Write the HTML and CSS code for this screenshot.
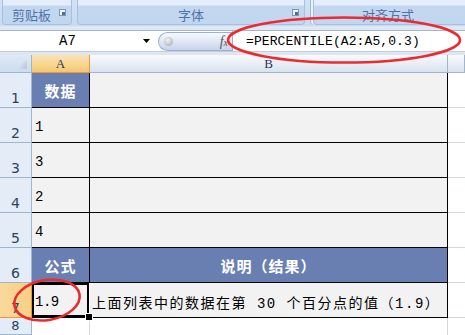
FILE: index.html
```html
<!DOCTYPE html>
<html lang="zh">
<head>
  <meta charset="UTF-8" />
  <title>PERCENTILE</title>
  <link rel="stylesheet" href="styles.css">
</head>
<body>
  <div class="window">

    <div class="ribbon">
      <div class="group group-clip">
        <span class="group-label">剪贴板</span>
        <span class="launcher"></span>
      </div>
      <div class="group group-font">
        <span class="group-label">字体</span>
        <span class="launcher"></span>
      </div>
      <div class="group group-align">
        <span class="group-label">对齐方式</span>
      </div>
    </div>
    <div class="ribbon-foot"></div>

    <div class="formula-bar">
      <div class="name-box">
        <span class="name">A7</span>
        <svg class="drop" width="7" height="4" viewBox="0 0 7 4"><path d="M0 0h7L3.5 4z" fill="#000"/></svg>
      </div>
      <div class="fx-pill">
        <span class="knob"></span>
        <span class="fx">f<small>x</small></span>
      </div>
      <div class="formula">=PERCENTILE(A2:A5,0.3)</div>
    </div>
    <div class="bar-gap"></div>

    <div class="sheet">
      <div class="corner"></div>
      <div class="col-head active">A</div>
      <div class="col-head">B</div>
      <div class="col-head"></div>

      <div class="row-head">1</div>
      <div class="cell head">数据</div>
      <div class="cell"></div>
      <div class="cell plain"></div>

      <div class="row-head">2</div>
      <div class="cell">1</div>
      <div class="cell"></div>
      <div class="cell plain"></div>

      <div class="row-head">3</div>
      <div class="cell">3</div>
      <div class="cell"></div>
      <div class="cell plain"></div>

      <div class="row-head">4</div>
      <div class="cell">2</div>
      <div class="cell"></div>
      <div class="cell plain"></div>

      <div class="row-head">5</div>
      <div class="cell">4</div>
      <div class="cell"></div>
      <div class="cell plain"></div>

      <div class="row-head">6</div>
      <div class="cell head">公式</div>
      <div class="cell head">说明（结果）</div>
      <div class="cell plain"></div>

      <div class="row-head active">7</div>
      <div class="cell selected">1.9</div>
      <div class="cell note">上面列表中的数据在第 30 个百分点的值（1.9）</div>
      <div class="cell plain"></div>

      <div class="row-head last">8</div>
      <div class="cell blank"></div>
      <div class="cell blank"></div>
      <div class="cell blank"></div>
    </div>

    <svg class="marks" width="465" height="335" viewBox="0 0 465 335">
      <ellipse cx="344" cy="40" rx="116" ry="22.5" fill="none" stroke="#ea2b30" stroke-width="2.6"/>
      <ellipse cx="47" cy="300" rx="33" ry="20" transform="rotate(-10 47 300)" fill="none" stroke="#ea2b30" stroke-width="2.6"/>
    </svg>
  </div>
</body>
</html>
```

FILE: styles.css
```css
* {
  box-sizing: border-box;
}
body {
  margin: 0;
  background: #fff;
  font-family: "Liberation Sans", "Noto Sans CJK SC", sans-serif;
  overflow: hidden;
}
.window {
  position: relative;
  width: 465px;
  height: 335px;
  overflow: hidden;
}

/* ribbon */
.ribbon {
  display: flex;
  height: 26px;
  background: linear-gradient(to bottom, #d3e2f4 0%, #c8daf0 100%);
}
.group {
  position: relative;
  display: flex;
  align-items: center;
  justify-content: center;
  height: 25px;
  padding-top: 5px;
  border: 1px solid #a8c0df;
  border-top: none;
  border-radius: 0 0 4px 4px;
  background: linear-gradient(to bottom, #e4eefa 0px, #e4eefa 5px, #c3d8f0 6px, #c1d6ef 100%);
}
.group-clip {
  margin-left: 2px;
  width: 70px;
  justify-content: flex-start;
  padding-left: 9px;
}
.group-font {
  margin-left: 5px;
  width: 228px;
}
.group-align {
  margin-left: 8px;
  flex: 1;
  justify-content: flex-start;
  padding-left: 48px;
  border-right: none;
  border-radius: 0 0 0 4px;
  box-shadow: -2px 0 0 #e9f1fb, -3px 0 0 #9fb8d9;
}
.group-label {
  font-size: 13px;
  color: #4d72a8;
}
.launcher {
  position: absolute;
  right: 5px;
  top: 9px;
  width: 7px;
  height: 7px;
  border: 1px solid #7f96b6;
  background: #eef4fb;
}
.launcher::after {
  content: "";
  position: absolute;
  right: 0;
  bottom: 0;
  width: 3px;
  height: 3px;
  background: #4f6d96;
}
.ribbon-foot {
  height: 4px;
  background: #dce8f6;
}

/* formula bar */
.formula-bar {
  display: flex;
  height: 22px;
  border-top: 1px solid #a5b6cc;
  border-bottom: 1px solid #c0cddd;
  background: #fff;
}
.name-box {
  display: flex;
  align-items: center;
  width: 158px;
  padding-left: 59px;
  padding-right: 8px;
}
.name {
  flex: 1;
  font-family: "Liberation Mono", monospace;
  font-size: 14px;
  color: #000;
}
.fx-pill {
  display: flex;
  align-items: center;
  justify-content: space-between;
  width: 74px;
  height: 19px;
  margin-top: 1px;
  padding: 0 4px 0 5px;
  border: 1px solid #9cb0cc;
  border-right: none;
  border-radius: 10px 0 0 10px;
  background: linear-gradient(to bottom, #f7f9fc 0%, #e2e9f4 45%, #c6d4e9 100%);
}
.knob {
  width: 9px;
  height: 9px;
  border-radius: 50%;
  background: radial-gradient(circle at 40% 35%, #f2f2f2 0%, #b9bec6 70%, #9aa0a9 100%);
}
.fx {
  font-family: "Liberation Serif", serif;
  font-style: italic;
  font-size: 14px;
  color: #555;
}
.fx small {
  font-size: 10px;
}
.formula {
  flex: 1;
  display: flex;
  align-items: center;
  padding-left: 13px;
  border-left: 1px solid #9cb0cc;
  font-family: "Liberation Mono", monospace;
  font-size: 13px;
  letter-spacing: 0.1px;
  color: #000;
}
.bar-gap {
  height: 3px;
  background: #dde6f2;
}

/* sheet */
.sheet {
  display: grid;
  grid-template-columns: 32px 58px 358px 1fr;
  grid-template-rows: 18px repeat(7, 35px) 17px;
  font-family: "Liberation Mono", "Noto Sans CJK SC", monospace;
}
.corner {
  position: relative;
  background: linear-gradient(to bottom, #dfe9f6, #cddcf0);
  border-right: 1px solid #9eb6ce;
  border-bottom: 1px solid #9eb6ce;
}
.corner::after {
  content: "";
  position: absolute;
  right: 4px;
  bottom: 3px;
  width: 10px;
  height: 10px;
  background: linear-gradient(135deg, #eef2f7, #b9c6d6);
  clip-path: polygon(100% 0, 100% 100%, 0 100%);
}
.col-head {
  display: flex;
  align-items: center;
  justify-content: center;
  background: linear-gradient(to bottom, #f8fafd 0%, #e6ecf5 60%, #d8e1ee 100%);
  border-right: 1px solid #9eb6ce;
  border-bottom: 1px solid #9eb6ce;
  font-family: "Liberation Serif", serif;
  font-size: 13px;
  color: #213a55;
}
.col-head.active {
  background: linear-gradient(to bottom, #fae3b3 0%, #f8d58f 60%, #f4c66d 100%);
  border-right-color: #f29536;
  border-bottom-color: #f29536;
}
.row-head {
  display: flex;
  align-items: flex-end;
  justify-content: center;
  padding-bottom: 1px;
  background: #e4ecf7;
  border-right: 1px solid #9eb6ce;
  border-bottom: 1px solid #9eb6ce;
  font-family: "DejaVu Sans", sans-serif;
  font-size: 14px;
  color: #2a4460;
}
.row-head.active {
  background: linear-gradient(to right, #f9d99b, #f7cf84);
  border-right-color: #f29536;
  border-bottom-color: #f29536;
}
.row-head.last {
  align-items: flex-start;
  padding-top: 0;
  font-size: 13px;
}
.cell {
  display: flex;
  align-items: center;
  padding: 3px 0 0 3px;
  background: #f2f2f2;
  border-right: 1px solid #000;
  border-bottom: 1px solid #000;
  font-size: 14px;
  color: #000;
}
.cell.head {
  justify-content: center;
  padding: 0;
  background: #6a7fb1;
  color: #fff;
  font-family: "Noto Sans CJK SC", sans-serif;
  font-weight: bold;
  font-size: 15px;
  letter-spacing: 1px;
}
.cell.note {
  letter-spacing: 1.5px;
  padding-left: 2px;
}
.cell.selected {
  position: relative;
  box-shadow: inset 0 0 0 2px #000;
  border-right-color: #fff;
  letter-spacing: -0.5px;
}
.cell.selected::after {
  content: "";
  position: absolute;
  right: -4px;
  bottom: -4px;
  width: 6px;
  height: 6px;
  background: #000;
  border: 1px solid #fff;
  z-index: 2;
}
.cell.plain {
  background: #fff;
  border-right: none;
  border-bottom-color: #d0d7e5;
}
.cell.blank {
  background: #fff;
  border-bottom: none;
  border-right-color: #d0d7e5;
}
.cell.blank:last-child {
  border-right: none;
}

/* red marks */
.marks {
  position: absolute;
  left: 0;
  top: 0;
  pointer-events: none;
}
```
